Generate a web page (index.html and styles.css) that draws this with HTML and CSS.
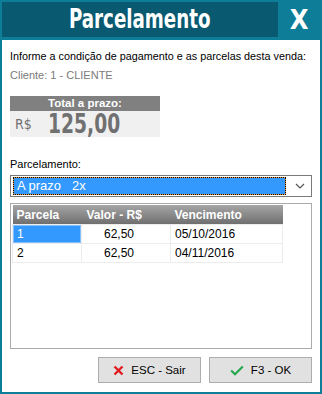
FILE: index.html
```html
<!DOCTYPE html>
<html lang="pt-BR">

<head>
    <meta charset="UTF-8">
    <meta name="viewport" content="width=device-width, initial-scale=1.0">
    <title>Parcelamento</title>
    <link rel="stylesheet" href="styles.css">
</head>

<body>
    <div class="window">
        <div class="titlebar">
            <div class="title"><span>Parcelamento</span></div>
            <div class="close">X</div>
        </div>
        <div class="panel">
            <p class="intro">Informe a condição de pagamento e as parcelas desta venda:</p>
            <p class="client">Cliente: 1 - CLIENTE</p>

            <div class="total">
                <div class="total-head">Total a prazo:</div>
                <div class="total-body">
                    <span class="cur">R$</span>
                    <span class="amount">125,00</span>
                </div>
            </div>

            <div class="label">Parcelamento:</div>
            <div class="select">
                <span class="sel-value">A prazo&nbsp;&nbsp;&nbsp;2x</span>
                <svg class="chevron" width="10" height="6" viewBox="0 0 10 6">
                    <path d="M1 1 L5 5 L9 1" fill="none" stroke="#555" stroke-width="1.2" />
                </svg>
            </div>

            <div class="grid">
                <table>
                    <colgroup>
                        <col class="w1">
                        <col class="w2">
                        <col class="w3">
                    </colgroup>
                    <thead>
                        <tr>
                            <th>Parcela</th>
                            <th class="c2">Valor - R$</th>
                            <th>Vencimento</th>
                        </tr>
                    </thead>
                    <tbody>
                        <tr>
                            <td class="selected">1</td>
                            <td class="c2">62,50</td>
                            <td>05/10/2016</td>
                        </tr>
                        <tr>
                            <td>2</td>
                            <td class="c2">62,50</td>
                            <td>04/11/2016</td>
                        </tr>
                    </tbody>
                </table>
            </div>

            <div class="actions">
                <button class="btn">
                    <svg width="11" height="11" viewBox="0 0 11 11">
                        <path d="M1.5 1.5 L9.5 9.5 M9.5 1.5 L1.5 9.5" stroke="#e4171f" stroke-width="2.3" />
                    </svg>
                    ESC - Sair
                </button>
                <button class="btn">
                    <svg width="14" height="11" viewBox="0 0 14 11">
                        <path d="M1.2 5.5 L5 9.2 L12.8 1.5" fill="none" stroke="#22a84a" stroke-width="2.1" />
                    </svg>
                    F3 - OK
                </button>
            </div>
        </div>
    </div>
</body>

</html>
```

FILE: styles.css
```css
body,
p {
    margin: 0;
}

body {
    font-family: "Liberation Sans", Arial, sans-serif;
    font-size: 11px;
    color: #000;
}

.window {
    display: flex;
    flex-direction: column;
    box-sizing: border-box;
    width: 322px;
    height: 394px;
    padding: 2px;
    background-color: #0d7d98;
}

.titlebar {
    display: flex;
    height: 38px;
}

.title {
    width: 276px;
    height: 35px;
    line-height: 35px;
    background-color: #095a70;
    color: #fff;
    text-align: center;
    font-family: "DejaVu Sans Condensed", "Liberation Sans", sans-serif;
    font-weight: bold;
    font-size: 26px;
}

.title>span {
    display: inline-block;
    transform: scaleX(0.78);
}

.close {
    flex: 1;
    height: 35px;
    line-height: 36px;
    color: #fff;
    text-align: center;
    font-family: "DejaVu Sans Condensed", sans-serif;
    font-weight: bold;
    font-size: 27px;
}

.panel {
    flex: 1;
    display: flex;
    flex-direction: column;
    padding: 0 8px;
    background-color: #fff;
}

.intro {
    margin-top: 9px;
    line-height: 14px;
    font-size: 10.8px;
}

.client {
    margin-top: 5px;
    line-height: 14px;
    color: #7a7a7a;
}

.total {
    width: 150px;
    margin-top: 14px;
}

.total-head {
    height: 15px;
    line-height: 15px;
    background-color: #808080;
    color: #fff;
    text-align: center;
    font-weight: bold;
    font-size: 11.5px;
}

.total-body {
    display: flex;
    align-items: center;
    height: 26px;
    background-color: #f0f0f0;
    color: #707070;
    font-family: "DejaVu Sans Condensed", sans-serif;
}

.cur {
    width: 33px;
    padding-left: 5px;
    font-size: 14px;
}

.amount {
    display: inline-block;
    transform: scaleX(0.8);
    transform-origin: 0 50%;
    font-weight: bold;
    font-size: 26px;
}

.label {
    margin-top: 20px;
    line-height: 14px;
}

.select {
    display: flex;
    align-items: center;
    box-sizing: border-box;
    height: 22px;
    margin-top: 4px;
    padding: 0 2px;
    border: 1px solid #7a7a7a;
}

.sel-value {
    flex: 1;
    height: 16px;
    line-height: 16px;
    padding-left: 3px;
    border: 1px dotted #000;
    background: linear-gradient(#3399ff, #3399ff) padding-box, #e89a30 border-box;
    color: #fff;
    font-size: 13px;
}

.chevron {
    margin: 0 4px 0 9px;
}

.grid {
    box-sizing: border-box;
    height: 146px;
    margin-top: 6px;
    padding: 1px;
    border: 1px solid #ababab;
}

.grid table {
    width: 270px;
    table-layout: fixed;
    border-collapse: collapse;
    font-size: 12px;
}

.w1 {
    width: 69px;
}

.w2 {
    width: 89px;
}

.w3 {
    width: 112px;
}

.grid th {
    height: 19px;
    padding: 0 0 0 4px;
    background: linear-gradient(#a6a6a6, #6f6f6f);
    color: #fff;
    text-align: left;
    font-weight: bold;
}

.grid td {
    height: 18px;
    padding: 0 0 0 4px;
    border: 1px solid #ececec;
}

.grid th.c2 {
    padding-left: 5px;
}

.grid td.c2 {
    padding-left: 22px;
}

.grid td.selected {
    background-color: #3399ff;
    box-shadow: inset 0 0 0 1px #86c1ff;
    color: #fff;
}

.actions {
    display: flex;
    justify-content: flex-end;
    gap: 8px;
    margin-top: 8px;
}

.btn {
    display: flex;
    align-items: center;
    justify-content: center;
    gap: 7px;
    width: 103px;
    height: 26px;
    border: 1px solid #adadad;
    background-color: #e1e1e1;
    font-family: "Liberation Sans", Arial, sans-serif;
    font-size: 11.5px;
    color: #000;
}
```
